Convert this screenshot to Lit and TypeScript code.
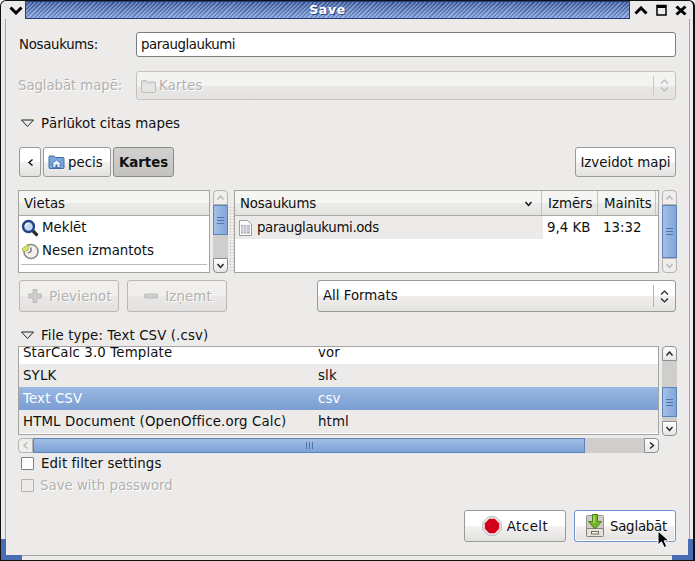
import { LitElement, html, css, svg } from "lit";
import { customElement } from "lit/decorators.js";

type Dir = "up" | "down" | "left" | "right";

const CHEVRONS: Record<Dir, string> = {
  up: "1.5,6.500 4.500,3 7.500,6.500",
  down: "1.5,3 4.500,6.500 7.500,3",
  left: "6.500,1.500 3,4.500 6.500,7.500",
  right: "3,1.500 6.500,4.500 3,7.500",
};

function chevron(dir: Dir) {
  return html`<svg class="chev" width="9" height="9" viewBox="0 0 9 9">
    <polyline points=${CHEVRONS[dir]} fill="none" stroke="currentColor" stroke-width="1.4" />
  </svg>`;
}

const updown = () => html`<svg class="updown" width="9" height="15" viewBox="0 0 9 15">
  <polyline points="1,5.500 4.500,2 8,5.500" fill="none" stroke="currentColor" stroke-width="1.2" />
  <polyline points="1,9.500 4.500,13 8,9.500" fill="none" stroke="currentColor" stroke-width="1.2" />
</svg>`;

const folderPlain = html`<svg width="17" height="16" viewBox="0 0 17 16">
  <path d="M1.500 3.500 a1 1 0 0 1 1-1 h4 l1.500 1.500 h6.500 a1 1 0 0 1 1 1 v8.500 a1 1 0 0 1-1 1 h-12 a1 1 0 0 1-1-1z" fill="#dcdbda" stroke="#bdbcbb" />
  <rect x="2" y="6" width="13" height="8" fill="#e6e5e4" />
</svg>`;

const folderHome = html`<svg width="17" height="16" viewBox="0 0 17 16">
  <path d="M1 3 a1 1 0 0 1 1-1 h4 l1.500 1.500 h7.500 a1 1 0 0 1 1 1 v9 a1 1 0 0 1-1 1 h-13 a1 1 0 0 1-1-1z" fill="#7ba6dc" stroke="#3f6ca8" />
  <path d="M3.500 10 L8.500 6 L13.500 10 H12 V13.500 H5 V10z" fill="#eef3fa" stroke="#3f6ca8" stroke-width="0.8" />
  <rect x="7.500" y="10.500" width="2" height="3" fill="#3f6ca8" />
</svg>`;

const searchIcon = html`<svg width="18" height="18" viewBox="0 0 18 18">
  <line x1="11" y1="11" x2="15.500" y2="15.500" stroke="#2e2e2e" stroke-width="3.200" stroke-linecap="round" />
  <circle cx="7.500" cy="7.500" r="5.500" fill="#c6d8f0" stroke="#23428c" stroke-width="2.400" />
  <path d="M4.500 7.500 a3 3 0 0 1 3-3" fill="none" stroke="#fff" stroke-width="1.200" />
</svg>`;

const recentIcon = html`<svg width="18" height="18" viewBox="0 0 18 18">
  <circle cx="10" cy="9.500" r="7" fill="#f1f0ea" stroke="#8b8a86" stroke-width="1.600" />
  <path d="M10 5.500 V9.500 L7 11" fill="none" stroke="#444" stroke-width="1" />
  <path d="M1 7 L7.500 2 L7 8 L2.500 10z" fill="#dfe77a" stroke="#9aa22f" stroke-width="0.800" />
</svg>`;

const sheetIcon = html`<svg width="15" height="18" viewBox="0 0 15 18">
  <path d="M1.500 1.500 H9.500 L13.500 5 V16.500 H1.500z" fill="#fbfbfb" stroke="#9c9c9c" />
  <path d="M3 6 H12 V14.500 H3z" fill="#aeb3be" />
  <path d="M3 8 H12 M3 10 H12 M3 12 H12 M5.500 6 V14.500 M8.500 6 V14.500" stroke="#eeeff2" stroke-width="0.700" />
</svg>`;

const plusIcon = html`<svg width="18" height="18" viewBox="0 0 18 18">
  <path d="M7 2.500 h4 v4.500 h4.500 v4 h-4.500 v4.500 h-4 v-4.500 h-4.500 v-4 h4.500z" fill="#cfcecd" stroke="#bdbcbb" />
</svg>`;

const minusIcon = html`<svg width="18" height="18" viewBox="0 0 18 18">
  <rect x="2.500" y="7" width="13" height="4" rx="1" fill="#cfcecd" stroke="#bdbcbb" />
</svg>`;

const stopIcon = html`<svg width="20" height="20" viewBox="0 0 20 20">
  <path d="M6.500 0.800 H13.500 L19.200 6.500 V13.500 L13.500 19.200 H6.500 L0.800 13.500 V6.500z" fill="#f2f2f2" stroke="#b0b0b0" />
  <path d="M7.200 2.800 H12.800 L17.200 7.200 V12.800 L12.800 17.200 H7.200 L2.800 12.800 V7.200z" fill="#d4001a" />
</svg>`;

const saveIcon = html`<svg width="20" height="24" viewBox="0 0 20 24">
  <path d="M1.500 2.500 a1 1 0 0 1 1-1 h15 a1 1 0 0 1 1 1 v12 h-17z" fill="#cfcdc6" stroke="#96948c" />
  <path d="M1.500 14.500 h17 v7 a1 1 0 0 1-1 1 h-15 a1 1 0 0 1-1-1z" fill="#e4e2db" stroke="#85837b" />
  <rect x="6.500" y="17.500" width="7" height="2.500" fill="#f7f6f2" stroke="#6f6d65" />
  <path d="M7.500 0.500 h5 v7 h4 l-6.500 7.500 l-6.500-7.500 h4z" fill="#74b526" stroke="#4b8012" />
  <path d="M9 1.500 V9" stroke="#b6de73" stroke-width="1.500" />
</svg>`;

const cursorIcon = svg`<path d="M1 1 V15 L4.500 11.800 L7.200 17.500 L9.800 16.400 L7.200 10.800 H12z" fill="#000" stroke="#fff" stroke-width="1" />`;

const grip = (horizontal: boolean) => html`<svg class="grip" width="9" height="9" viewBox="0 0 9 9">
  ${horizontal
    ? svg`<path d="M1.500 1 V8 M4.500 1 V8 M7.500 1 V8" stroke="#4e74ac" />`
    : svg`<path d="M1 1.500 H8 M1 4.500 H8 M1 7.500 H8" stroke="#4e74ac" />`}
</svg>`;

interface ScrollParts {
  before: number;
  thumb: number;
  after: number;
}

function vscroll(parts: ScrollParts, upDisabled = false, downDisabled = false) {
  return html`<div class="vscroll">
    <div class="sb-btn top ${upDisabled ? "off" : ""}">${chevron("up")}</div>
    <div class="trough" style="height:${parts.before}px"></div>
    <div class="thumb v" style="height:${parts.thumb}px">${grip(false)}</div>
    <div class="trough" style="height:${parts.after}px"></div>
    <div class="sb-btn bottom ${downDisabled ? "off" : ""}">${chevron("down")}</div>
  </div>`;
}

@customElement("app-root")
export class AppRoot extends LitElement {
  static styles = css`
    :host {
      display: block;
      width: 695px;
      height: 561px;
      font-family: "DejaVu Sans", sans-serif;
      font-size: 13.33px;
      color: #101010;
      background: #fff;
    }

    .window {
      position: relative;
      box-sizing: border-box;
      width: 695px;
      height: 561px;
      background: #ecebea;
      border: 1px solid #111;
      border-right-width: 2px;
      border-radius: 6px 6px 0 0;
      overflow: hidden;
      display: flex;
      flex-direction: column;
    }

    .titlebar {
      height: 18px;
      flex: none;
      display: flex;
      box-sizing: border-box;
    }

    .menu-btn {
      width: 25px;
      flex: none;
      display: flex;
      align-items: center;
      justify-content: center;
      padding-left: 5px;
      border-right: 1px solid #2c3f6c;
      box-sizing: border-box;
    }

    .title {
      flex: 1;
      display: flex;
      align-items: center;
      justify-content: center;
      padding-bottom: 2px;
      box-sizing: border-box;
      color: #fff;
      font-weight: bold;
      font-size: 12.5px;
      letter-spacing: 0.6px;
      text-shadow: 1px 1px 0 #2a4580;
      border-bottom: 1px solid #1f3a78;
      border-top: 1px solid #24407f;
      background:
        repeating-linear-gradient(135deg, rgba(255, 255, 255, 0.26) 0 1.5px, rgba(10, 30, 90, 0.12) 1.5px 3px),
        linear-gradient(#3a5a9e, #7f9fdc);
    }

    .win-btns {
      width: 64px;
      flex: none;
      display: flex;
      align-items: center;
      gap: 8px;
      padding-left: 4px;
      box-sizing: border-box;
      border-left: 1px solid #2c3f6c;
    }

    .body {
      flex: 1;
      margin: 0 3px 4px 4px;
      padding: 13px 13px 0 12px;
      border: 1px solid #a3a3a2;
      border-top: none;
      display: flex;
      flex-direction: column;
      min-height: 0;
    }

    .form-row {
      display: grid;
      grid-template-columns: 118px 1fr;
      align-items: center;
    }

    .form-row label {
      padding-left: 1px;
      letter-spacing: -0.3px;
    }

    .form-row.off label {
      padding-left: 0;
      letter-spacing: -0.08px;
      color: #b2b1b0;
      text-shadow: 1px 1px 0 #fff;
    }

    .entry {
      height: 25px;
      box-sizing: border-box;
      background: #fff;
      border: 1px solid #7e7e7d;
      border-radius: 3px;
      display: flex;
      align-items: center;
      padding-left: 4px;
      letter-spacing: -0.45px;
    }

    .combo {
      box-sizing: border-box;
      border: 1px solid #9a9a99;
      border-radius: 3px;
      display: flex;
      align-items: center;
      background: linear-gradient(#fff 0 50%, #f0efee 50%, #e4e3e2);
    }

    .combo.off {
      height: 29px;
      border-color: #c4c3c2;
      color: #b2b1b0;
      background: linear-gradient(#f3f3f2 0 50%, #e9e8e7 50%, #e3e2e1);
      text-shadow: 1px 1px 0 #fff;
    }

    .combo .value {
      flex: 1;
      display: flex;
      align-items: center;
      gap: 2px;
      padding-left: 3px;
      letter-spacing: 0.2px;
    }

    .combo .arrow {
      flex: none;
      width: 21px;
      height: calc(100% - 8px);
      border-left: 1px solid #b5b4b3;
      display: flex;
      align-items: center;
      justify-content: center;
      color: #222;
    }

    .combo.off .arrow {
      color: #b8b7b6;
      border-left-color: #c9c8c7;
    }

    .combo.formats {
      width: 359px;
      height: 32px;
    }

    .combo.formats .value {
      padding-left: 5px;
      padding-bottom: 2px;
      letter-spacing: 0;
    }

    .expander {
      height: 18px;
      display: flex;
      align-items: center;
      gap: 7px;
      padding-left: 3px;
    }

    .mt-name {
      margin-top: 14px;
    }

    .mt-browse {
      margin-top: 14px;
    }

    .path-row {
      margin-top: 15px;
      height: 30px;
      display: flex;
      padding-left: 1px;
      gap: 2px;
    }

    .btn {
      box-sizing: border-box;
      border: 1px solid #9a9a99;
      border-radius: 3px;
      background: linear-gradient(#fff 0 50%, #f3f2f1 50%, #e3e2e1);
      display: flex;
      align-items: center;
      justify-content: center;
      gap: 5px;
    }

    .btn.back {
      width: 22px;
    }

    .btn.pecis {
      width: 68px;
      gap: 3px;
      justify-content: flex-start;
      padding-left: 4px;
    }

    .btn.current {
      width: 61px;
      font-weight: bold;
      background: linear-gradient(#d2d1d0, #c3c2c1);
      border-color: #8a8a89;
    }

    .btn.new-folder {
      width: 101px;
      margin-left: auto;
    }

    .btn.off {
      width: 100px;
      color: #b2b1b0;
      text-shadow: 1px 1px 0 #fff;
      border-color: #b9b8b7;
      background: linear-gradient(#f0efee 0 50%, #e9e8e7 50%, #e2e1e0);
      letter-spacing: 0.15px;
    }

    .panes {
      margin-top: 13px;
      height: 83px;
      display: flex;
    }

    .tree {
      box-sizing: border-box;
      border: 1px solid #a3a3a2;
      background: #fff;
      overflow: hidden;
      flex: none;
    }

    .tree.places {
      width: 192px;
    }

    .tree.files {
      width: 425px;
    }

    .head {
      height: 25px;
      box-sizing: border-box;
      display: flex;
      border-bottom: 1px solid #a8a8a7;
      background: linear-gradient(#f5f5f4 0 50%, #ecebea 50%, #e4e3e2);
    }

    .head > div {
      display: flex;
      align-items: center;
      padding-left: 5px;
      box-sizing: border-box;
    }

    .head .sep {
      border-right: 1px solid #c4c3c2;
    }

    .head .col-name {
      width: 307px;
      justify-content: space-between;
      padding-right: 8px;
      letter-spacing: -0.15px;
    }

    .head .col-size {
      width: 56px;
      padding-left: 6px;
    }

    .head .col-time {
      width: 58px;
      padding-left: 6px;
    }

    .place {
      height: 23px;
      display: flex;
      align-items: center;
      gap: 3px;
      padding-left: 2px;
    }

    .rule {
      height: 1px;
      margin: 2px 2px 3px;
      background: #bcbbba;
    }

    .file-row {
      height: 23px;
      display: flex;
      align-items: center;
    }

    .file-row .name {
      width: 308px;
      align-self: stretch;
      background: #ecebea;
      display: flex;
      align-items: center;
      gap: 4px;
      padding-left: 3px;
      box-sizing: border-box;
      letter-spacing: -0.35px;
    }

    .file-row .size {
      width: 55px;
      padding-left: 4px;
      box-sizing: border-box;
    }

    .file-row .time {
      padding-left: 5px;
    }

    .vscroll {
      width: 15px;
      flex: none;
      display: flex;
      flex-direction: column;
      margin-left: 3px;
    }

    .sb-btn {
      box-sizing: border-box;
      flex: none;
      height: 15px;
      border: 1px solid #8f8f8e;
      background: linear-gradient(#fff, #e6e5e4);
      display: flex;
      align-items: center;
      justify-content: center;
      color: #222;
    }

    .sb-btn.off {
      color: #b8b7b6;
      border-color: #b5b4b3;
      background: #efeeed;
    }

    .sb-btn.top {
      border-radius: 4px 4px 0 0;
    }

    .sb-btn.bottom {
      border-radius: 0 0 4px 4px;
    }

    .sb-btn.start {
      width: 15px;
      height: 15px;
      border-radius: 4px 0 0 4px;
    }

    .sb-btn.end {
      width: 15px;
      height: 15px;
      border-radius: 0 4px 4px 0;
    }

    .trough {
      background: #cfcecd;
      flex: none;
    }

    .thumb {
      box-sizing: border-box;
      flex: none;
      border: 1px solid #5d83bb;
      display: flex;
      align-items: center;
      justify-content: center;
    }

    .thumb.v {
      background: linear-gradient(90deg, #a4c0e6, #82a6d8);
    }

    .thumb.h {
      height: 15px;
      background: linear-gradient(#a0bde4, #7fa3d6);
    }

    .handle {
      width: 5px;
      flex: none;
      background-image: radial-gradient(#bbbab9 0.7px, transparent 0.8px);
      background-size: 3px 3px;
      margin: 16px 0 0 1px;
    }

    .button-row {
      margin-top: 7px;
      height: 32px;
      display: flex;
      padding-left: 1px;
      gap: 8px;
    }

    .button-row .formats {
      margin-left: auto;
    }

    .mt-type {
      margin-top: 14px;
      letter-spacing: 0.12px;
    }

    .filter-panes {
      margin-top: 2px;
      height: 89px;
      display: flex;
    }

    .filter-list {
      width: 641px;
      flex: none;
      box-sizing: border-box;
      border: 1px solid #a3a3a2;
      overflow: hidden;
      background: #fff;
    }

    .filter-list .inner {
      margin-top: -6px;
    }

    .type {
      height: 23px;
      display: grid;
      grid-template-columns: 295px 1fr;
      align-items: center;
      padding-left: 4px;
      letter-spacing: 0.14px;
    }

    .type.alt {
      background: #ecebea;
    }

    .type.sel {
      color: #fff;
      background: linear-gradient(#99b8e2, #7a9ed2);
    }

    .hscroll {
      margin-top: 3px;
      width: 641px;
      display: flex;
      flex: none;
    }

    .hscroll .trough {
      flex: 1;
    }

    .check {
      height: 18px;
      display: flex;
      align-items: center;
      gap: 7px;
      padding-left: 3px;
      letter-spacing: 0.1px;
    }

    .box {
      width: 11px;
      height: 11px;
      background: #fff;
      border: 1px solid #7e7e7d;
      border-radius: 1px;
      flex: none;
    }

    .check.first {
      margin-top: 1px;
    }

    .check.off {
      margin-top: 4px;
      gap: 6px;
      letter-spacing: 0;
      color: #b2b1b0;
      text-shadow: 1px 1px 0 #fff;
    }

    .check.off .box {
      background: #ecebea;
      border-color: #b5b4b3;
    }

    .actions {
      margin-top: 16px;
      height: 32px;
      display: flex;
      justify-content: flex-end;
      gap: 8px;
    }

    .actions .btn {
      width: 102px;
    }

    .actions .cancel {
      letter-spacing: 0.5px;
    }

    .actions .btn.focus {
      padding-left: 2px;
      letter-spacing: -0.2px;
      border-color: #6f93cc;
      box-shadow: inset 0 0 0 1px #fff;
    }

    .corner {
      position: absolute;
      background: #4a6cb5;
    }

    .corner.l1 {
      left: 0;
      bottom: 0;
      width: 5px;
      height: 21px;
    }

    .corner.l2 {
      left: 0;
      bottom: 0;
      width: 21px;
      height: 5px;
    }

    .corner.r1 {
      right: 0;
      bottom: 0;
      width: 5px;
      height: 21px;
    }

    .corner.r2 {
      right: 0;
      bottom: 0;
      width: 21px;
      height: 5px;
    }

    .cursor {
      position: absolute;
      left: 656px;
      top: 529px;
    }

    .chev,
    .updown,
    .grip {
      display: block;
    }
  `;

  render() {
    return html`
      <div class="window">
        <div class="titlebar">
          <div class="menu-btn">
            <svg width="14" height="9" viewBox="0 0 14 9">
              <path d="M1.500 1.500 L7 7 L12.500 1.500" fill="none" stroke="#000" stroke-width="3" />
            </svg>
          </div>
          <div class="title">Save</div>
          <div class="win-btns">
            <svg width="14" height="9" viewBox="0 0 14 9">
              <path d="M1.500 7.500 L7 2 L12.500 7.500" fill="none" stroke="#000" stroke-width="3" />
            </svg>
            <svg width="11" height="12" viewBox="0 0 11 12">
              <rect x="1" y="1.500" width="9" height="9.500" fill="none" stroke="#000" stroke-width="1.500" />
              <rect x="1" y="1" width="9" height="3" fill="#000" />
            </svg>
            <svg width="12" height="11" viewBox="0 0 12 11">
              <path d="M1.500 1.500 L10.500 9.500 M10.500 1.500 L1.500 9.500" stroke="#000" stroke-width="3" />
            </svg>
          </div>
        </div>

        <div class="body">
          <div class="form-row">
            <label>Nosaukums:</label>
            <div class="entry">parauglaukumi</div>
          </div>
          <div class="form-row off mt-name">
            <label>Saglabāt mapē:</label>
            <div class="combo off">
              <div class="value">${folderPlain}<span>Kartes</span></div>
              <div class="arrow">${updown()}</div>
            </div>
          </div>

          <div class="expander mt-browse">
            ${this.renderTriangle()}
            <span>Pārlūkot citas mapes</span>
          </div>

          <div class="path-row">
            <div class="btn back">${chevron("left")}</div>
            <div class="btn pecis">${folderHome}<span>pecis</span></div>
            <div class="btn current">Kartes</div>
            <div class="btn new-folder">Izveidot mapi</div>
          </div>

          <div class="panes">
            <div class="tree places">
              <div class="head"><div>Vietas</div></div>
              <div class="place">${searchIcon}<span>Meklēt</span></div>
              <div class="place">${recentIcon}<span>Nesen izmantots</span></div>
              <div class="rule"></div>
              <div class="place">${folderHome}<span>pecis</span></div>
            </div>
            ${vscroll({ before: 0, thumb: 30, after: 23 }, true, false)}
            <div class="handle"></div>
            <div class="tree files">
              <div class="head">
                <div class="col-name sep"><span>Nosaukums</span>${chevron("down")}</div>
                <div class="col-size sep">Izmērs</div>
                <div class="col-time sep">Mainīts</div>
              </div>
              <div class="file-row">
                <div class="name">${sheetIcon}<span>parauglaukumi.ods</span></div>
                <div class="size">9,4 KB</div>
                <div class="time">13:32</div>
              </div>
            </div>
            ${vscroll({ before: 0, thumb: 53, after: 0 }, true, true)}
          </div>

          <div class="button-row">
            <div class="btn off">${plusIcon}<span>Pievienot</span></div>
            <div class="btn off">${minusIcon}<span>Izņemt</span></div>
            <div class="combo formats">
              <div class="value">All Formats</div>
              <div class="arrow">${updown()}</div>
            </div>
          </div>

          <div class="expander mt-type">
            ${this.renderTriangle()}
            <span>File type: Text CSV (.csv)</span>
          </div>

          <div class="filter-panes">
            <div class="filter-list">
              <div class="inner">
                <div class="type"><span>StarCalc 3.0 Template</span><span>vor</span></div>
                <div class="type alt"><span>SYLK</span><span>slk</span></div>
                <div class="type sel"><span>Text CSV</span><span>csv</span></div>
                <div class="type alt"><span>HTML Document (OpenOffice.org Calc)</span><span>html</span></div>
              </div>
            </div>
            ${vscroll({ before: 26, thumb: 30, after: 4 })}
          </div>

          <div class="hscroll">
            <div class="sb-btn start off">${chevron("left")}</div>
            <div class="thumb h" style="width:552px">${grip(true)}</div>
            <div class="trough"></div>
            <div class="sb-btn end">${chevron("right")}</div>
          </div>

          <div class="check first"><span class="box"></span><span>Edit filter settings</span></div>
          <div class="check off"><span class="box"></span><span>Save with password</span></div>

          <div class="actions">
            <div class="btn cancel">${stopIcon}<span>Atcelt</span></div>
            <div class="btn focus">${saveIcon}<span>Saglabāt</span></div>
          </div>
        </div>

        <div class="corner l1"></div>
        <div class="corner l2"></div>
        <div class="corner r1"></div>
        <div class="corner r2"></div>
        <svg class="cursor" width="13" height="19" viewBox="0 0 13 19">${cursorIcon}</svg>
      </div>
    `;
  }

  private renderTriangle() {
    return html`<svg width="13" height="9" viewBox="0 0 13 9">
      <path d="M0.500 1 H12.500 L6.500 7.500z" fill="none" stroke="#222" stroke-width="1" />
    </svg>`;
  }
}
